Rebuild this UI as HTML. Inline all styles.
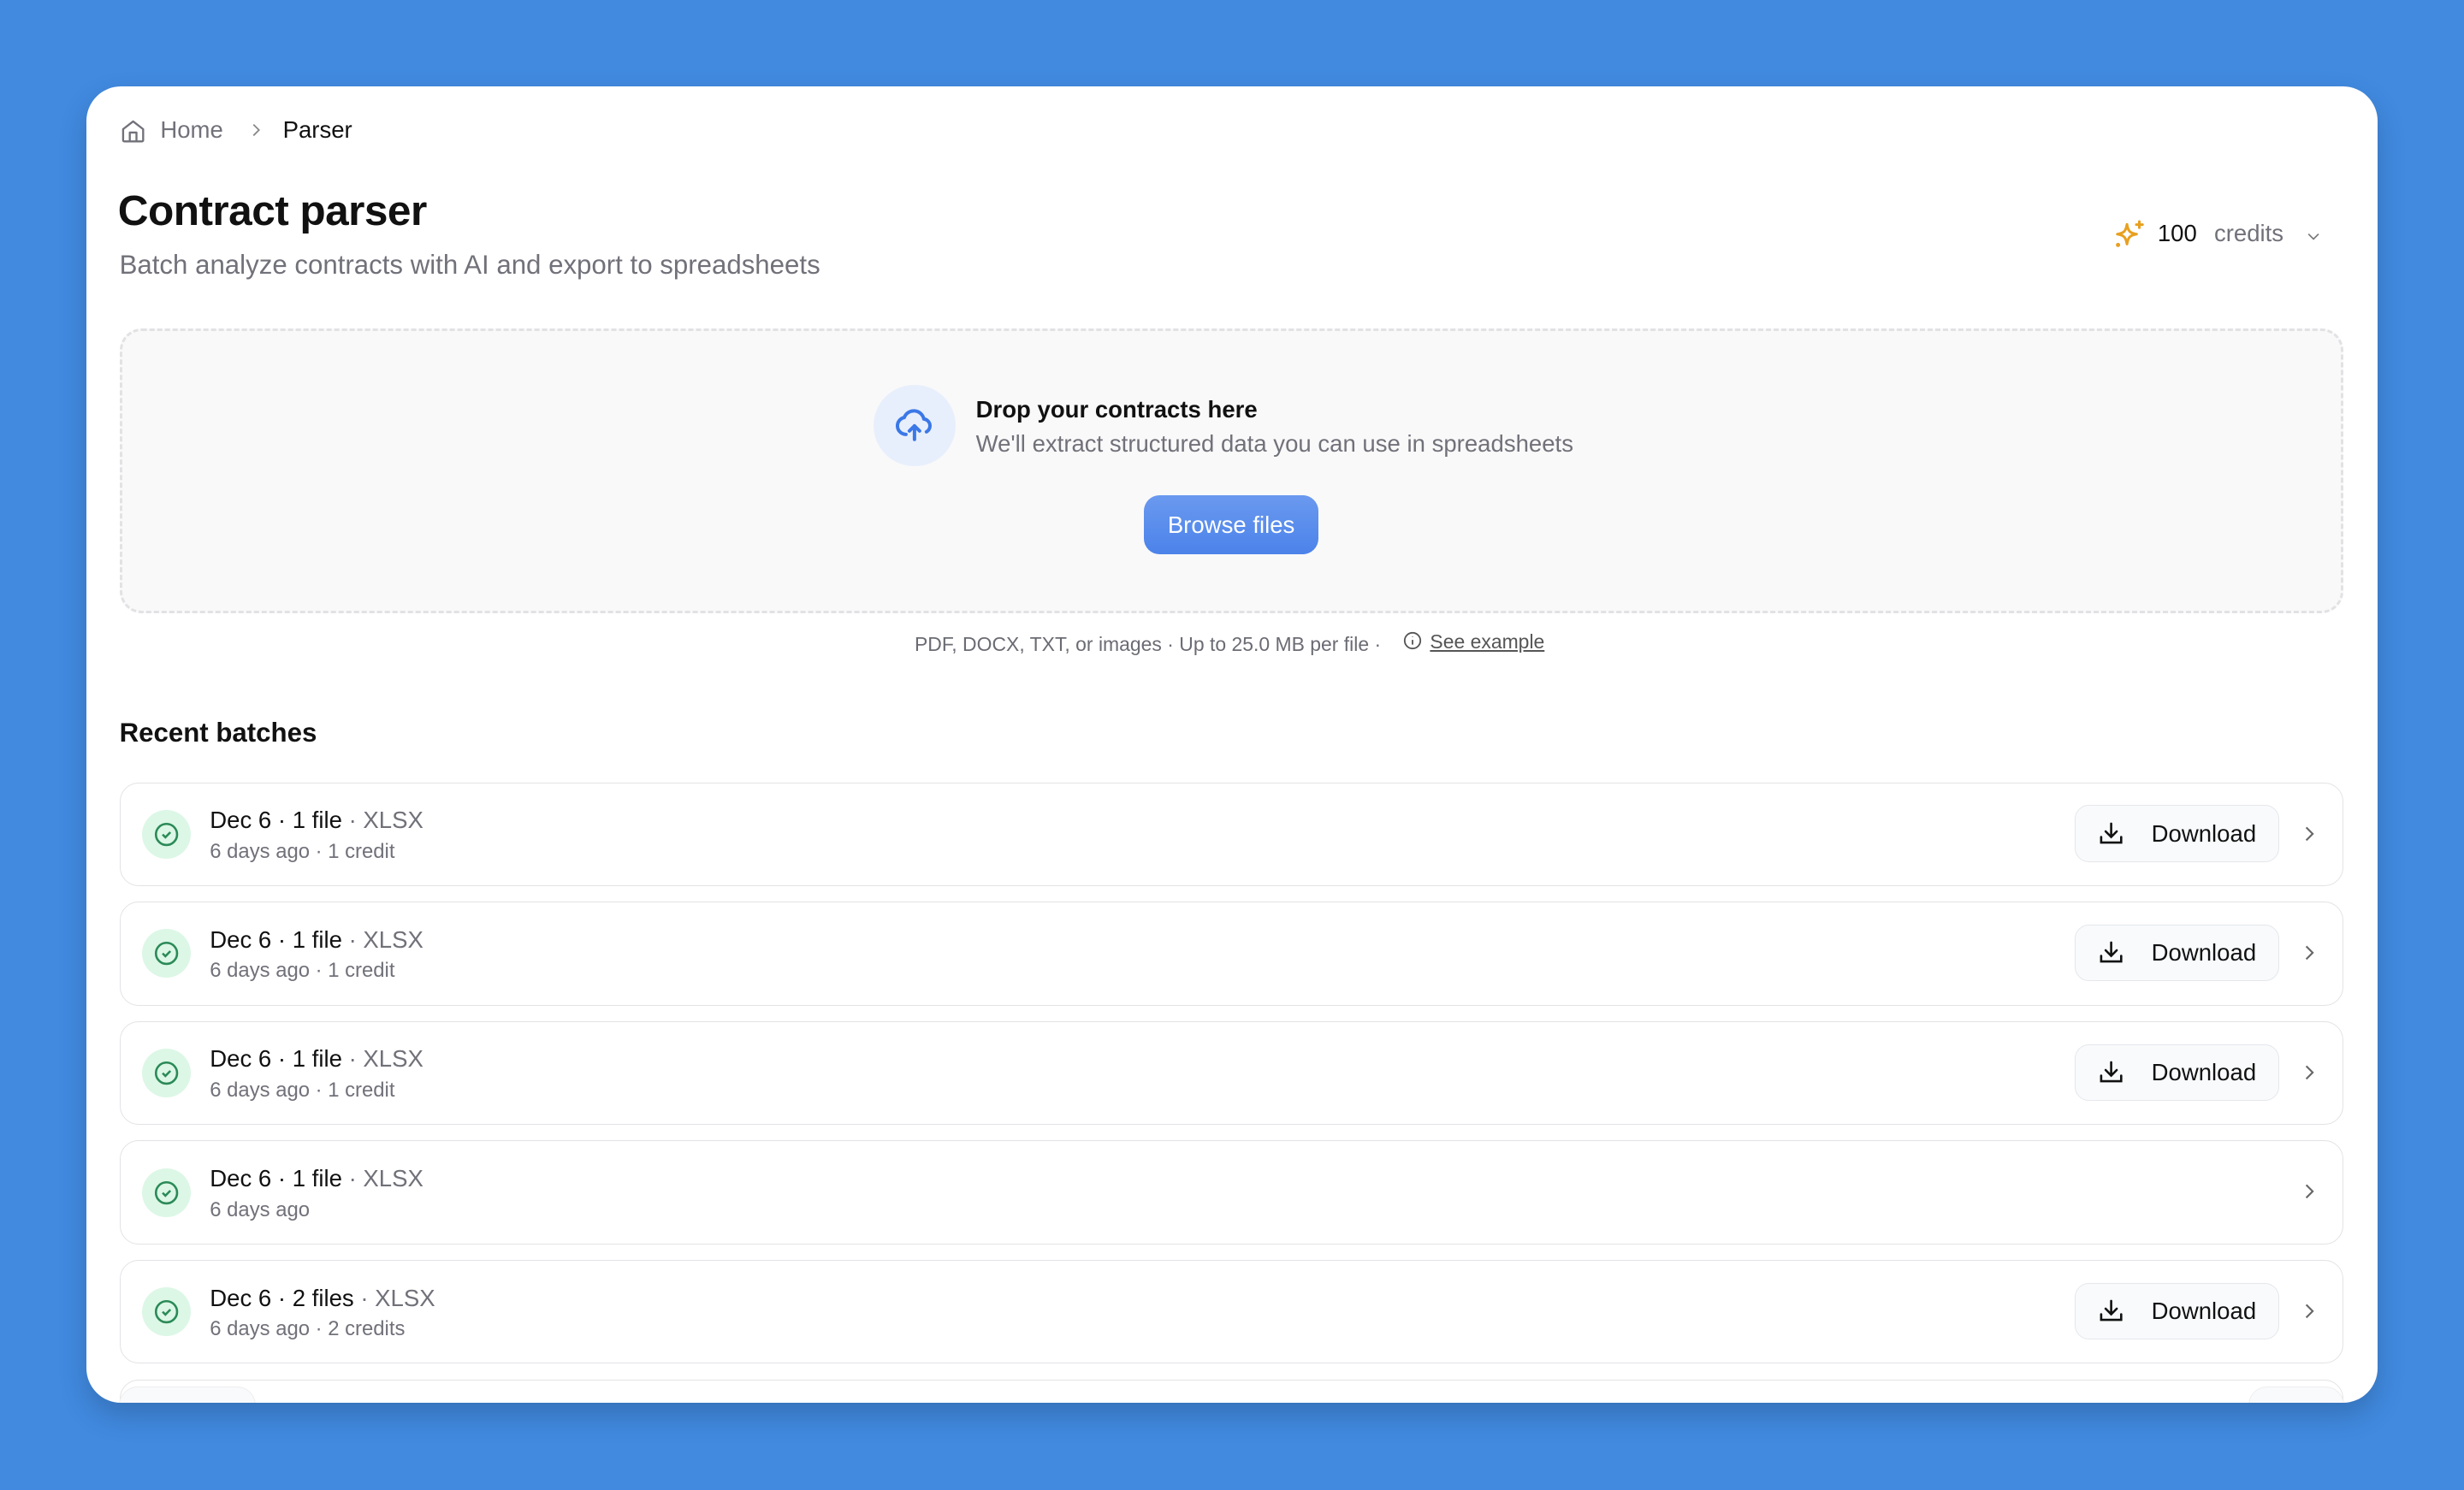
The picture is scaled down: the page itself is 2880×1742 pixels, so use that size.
<!DOCTYPE html>
<html><head><meta charset="utf-8"><style>
html,body{margin:0;padding:0;width:2880px;height:1742px;overflow:hidden;background:#418ae0}
#z{zoom:1.83673;width:1568px;height:948.4px;position:relative;font-family:"Liberation Sans",sans-serif;color:#111}
.card{position:absolute;left:55px;top:55px;width:1458px;height:838px;background:#fff;border-radius:22px;overflow:hidden;box-shadow:0 8px 18px rgba(0,0,0,.18)}
.abs{position:absolute}
.row{position:absolute;left:21px;width:1414px;height:65px;border:1px solid #e3e3e6;border-radius:12px;background:#fff}
.ic{position:absolute;left:14px;top:17px;width:31px;height:31px;border-radius:50%;background:#dcf7e6}
.t1{position:absolute;left:57px;top:15px;font-size:15px}
.t1 span{color:#71717a}
.t2{position:absolute;left:57px;top:36px;font-size:13px;color:#71717a}
.dl{position:absolute;left:1244px;top:14px;width:129px;height:35px;border:1px solid #e5e7eb;border-radius:9px;background:#f8fafc;font-size:15px}
.dl svg{position:absolute;left:14px;top:9px}
.dl b{font-weight:normal;position:absolute;left:48px;top:9px}
.chev{position:absolute;left:1386px;top:25px}
</style></head><body><div id="z">
<div class="card">
 <svg class="abs" style="left:21px;top:20px" width="17" height="17" viewBox="0 0 24 24" fill="none" stroke="#71717a" stroke-width="1.8" stroke-linejoin="round"><path d="M3 10l9-7 9 7v10a1 1 0 0 1-1 1H4a1 1 0 0 1-1-1z"/><path d="M9 21v-8h6v8"/></svg>
 <div class="abs" style="left:47px;top:19px;font-size:15px;color:#71717a">Home</div>
 <svg class="abs" style="left:102px;top:22px" width="12" height="12" viewBox="0 0 24 24" fill="none" stroke="#888" stroke-width="2"><path d="M9 5l7 7-7 7"/></svg>
 <div class="abs" style="left:125px;top:19px;font-size:15px">Parser</div>
 <div class="abs" style="left:20px;top:63px;font-size:27px;font-weight:bold;letter-spacing:-0.3px">Contract parser</div>
 <div class="abs" style="left:21px;top:104px;font-size:17px;color:#71717a">Batch analyze contracts with AI and export to spreadsheets</div>
 <svg class="abs" style="left:1290px;top:84px" width="21" height="21" viewBox="0 0 24 24" fill="none" stroke="#e8a020" stroke-width="1.9" stroke-linejoin="round" stroke-linecap="round"><path d="M10 4.5c.8 5 2.2 6.4 7 7.2-4.8.8-6.2 2.2-7 7.2-.8-5-2.2-6.4-7-7.2 4.8-.8 6.2-2.2 7-7.2z"/><path d="M19 2.5v4.5M16.8 4.75h4.5"/><circle cx="3.5" cy="19.5" r=".6" fill="#e8a020"/></svg>
 <div class="abs" style="left:1318px;top:85px;font-size:15px">100</div>
 <div class="abs" style="left:1354px;top:85px;font-size:15px;color:#71717a">credits</div>
 <svg class="abs" style="left:1412px;top:90px" width="11" height="11" viewBox="0 0 24 24" fill="none" stroke="#777" stroke-width="2"><path d="M5 9l7 7 7-7"/></svg>
 <div class="abs" style="left:21px;top:154px;width:1412px;height:178px;border:2px dashed #e2e2e5;border-radius:14px;background:#f9f9f9"></div>
 <div class="abs" style="left:501px;top:190px;width:52px;height:52px;border-radius:50%;background:#e8effc"></div>
 <svg class="abs" style="left:514px;top:203px" width="26" height="26" viewBox="0 0 24 24" fill="none" stroke="#3b78e7" stroke-width="2" stroke-linecap="round" stroke-linejoin="round"><path d="M7 17a5 5 0 0 1-1-9.9A6 6 0 0 1 17.5 8 4 4 0 0 1 19 15.5"/><path d="M12 20v-8M9 15l3-3 3 3"/></svg>
 <div class="abs" style="left:566px;top:197px;font-size:15px;font-weight:bold">Drop your contracts here</div>
 <div class="abs" style="left:566px;top:219px;font-size:15px;color:#71717a">We'll extract structured data you can use in spreadsheets</div>
 <div class="abs" style="left:673px;top:260px;width:111px;height:38px;border-radius:10px;background:linear-gradient(#6a99ef,#4c83ea);color:#fff;font-size:15px;text-align:center;line-height:38px">Browse files</div>
 <div class="abs" style="left:527px;top:348px;font-size:12.5px;color:#6b6b74">PDF, DOCX, TXT, or images · Up to 25.0 MB per file ·</div>
 <svg class="abs" style="left:838px;top:347px" width="12" height="12" viewBox="0 0 24 24" fill="none" stroke="#555" stroke-width="2"><circle cx="12" cy="12" r="10"/><path d="M12 11v6M12 7v.5"/></svg>
 <div class="abs" style="left:855px;top:346px;font-size:12.5px;color:#555;text-decoration:underline">See example</div>
 <div class="abs" style="left:21px;top:402px;font-size:17px;font-weight:bold">Recent batches</div>

 <div class="row" style="top:443px"><div class="ic"><svg style="margin:7px" width="17" height="17" viewBox="0 0 24 24" fill="none" stroke="#2b8a57" stroke-width="2"><circle cx="12" cy="12" r="9.5"/><path d="M8.5 12l2.5 2.5 4.5-4.5"/></svg></div><div class="t1">Dec 6 · 1 file <span>· XLSX</span></div><div class="t2">6 days ago · 1 credit</div><div class="dl"><svg width="17" height="17" viewBox="0 0 24 24" fill="none" stroke="#111" stroke-width="2" stroke-linecap="round"><path d="M12 3v12M7 10l5 5 5-5M3 15v5h18v-5"/></svg><b>Download</b></div><svg class="chev" width="14" height="14" viewBox="0 0 24 24" fill="none" stroke="#666" stroke-width="2"><path d="M9 5l7 7-7 7"/></svg></div>
 <div class="row" style="top:519px"><div class="ic"><svg style="margin:7px" width="17" height="17" viewBox="0 0 24 24" fill="none" stroke="#2b8a57" stroke-width="2"><circle cx="12" cy="12" r="9.5"/><path d="M8.5 12l2.5 2.5 4.5-4.5"/></svg></div><div class="t1">Dec 6 · 1 file <span>· XLSX</span></div><div class="t2">6 days ago · 1 credit</div><div class="dl"><svg width="17" height="17" viewBox="0 0 24 24" fill="none" stroke="#111" stroke-width="2" stroke-linecap="round"><path d="M12 3v12M7 10l5 5 5-5M3 15v5h18v-5"/></svg><b>Download</b></div><svg class="chev" width="14" height="14" viewBox="0 0 24 24" fill="none" stroke="#666" stroke-width="2"><path d="M9 5l7 7-7 7"/></svg></div>
 <div class="row" style="top:595px"><div class="ic"><svg style="margin:7px" width="17" height="17" viewBox="0 0 24 24" fill="none" stroke="#2b8a57" stroke-width="2"><circle cx="12" cy="12" r="9.5"/><path d="M8.5 12l2.5 2.5 4.5-4.5"/></svg></div><div class="t1">Dec 6 · 1 file <span>· XLSX</span></div><div class="t2">6 days ago · 1 credit</div><div class="dl"><svg width="17" height="17" viewBox="0 0 24 24" fill="none" stroke="#111" stroke-width="2" stroke-linecap="round"><path d="M12 3v12M7 10l5 5 5-5M3 15v5h18v-5"/></svg><b>Download</b></div><svg class="chev" width="14" height="14" viewBox="0 0 24 24" fill="none" stroke="#666" stroke-width="2"><path d="M9 5l7 7-7 7"/></svg></div>
 <div class="row" style="top:671px"><div class="ic"><svg style="margin:7px" width="17" height="17" viewBox="0 0 24 24" fill="none" stroke="#2b8a57" stroke-width="2"><circle cx="12" cy="12" r="9.5"/><path d="M8.5 12l2.5 2.5 4.5-4.5"/></svg></div><div class="t1">Dec 6 · 1 file <span>· XLSX</span></div><div class="t2">6 days ago</div><svg class="chev" width="14" height="14" viewBox="0 0 24 24" fill="none" stroke="#666" stroke-width="2"><path d="M9 5l7 7-7 7"/></svg></div>
 <div class="row" style="top:747px"><div class="ic"><svg style="margin:7px" width="17" height="17" viewBox="0 0 24 24" fill="none" stroke="#2b8a57" stroke-width="2"><circle cx="12" cy="12" r="9.5"/><path d="M8.5 12l2.5 2.5 4.5-4.5"/></svg></div><div class="t1">Dec 6 · 2 files <span>· XLSX</span></div><div class="t2">6 days ago · 2 credits</div><div class="dl"><svg width="17" height="17" viewBox="0 0 24 24" fill="none" stroke="#111" stroke-width="2" stroke-linecap="round"><path d="M12 3v12M7 10l5 5 5-5M3 15v5h18v-5"/></svg><b>Download</b></div><svg class="chev" width="14" height="14" viewBox="0 0 24 24" fill="none" stroke="#666" stroke-width="2"><path d="M9 5l7 7-7 7"/></svg></div>
 <div class="row" style="top:823px"><div class="abs" style="left:-1px;top:4px;width:86px;height:30px;border:1px solid #eee;border-radius:12px;background:#f9fafb"></div><div class="abs" style="left:1354px;top:4px;width:60px;height:30px;border:1px solid #eee;border-radius:12px;background:#f9fafb"></div></div>
</div>
</div></body></html>
